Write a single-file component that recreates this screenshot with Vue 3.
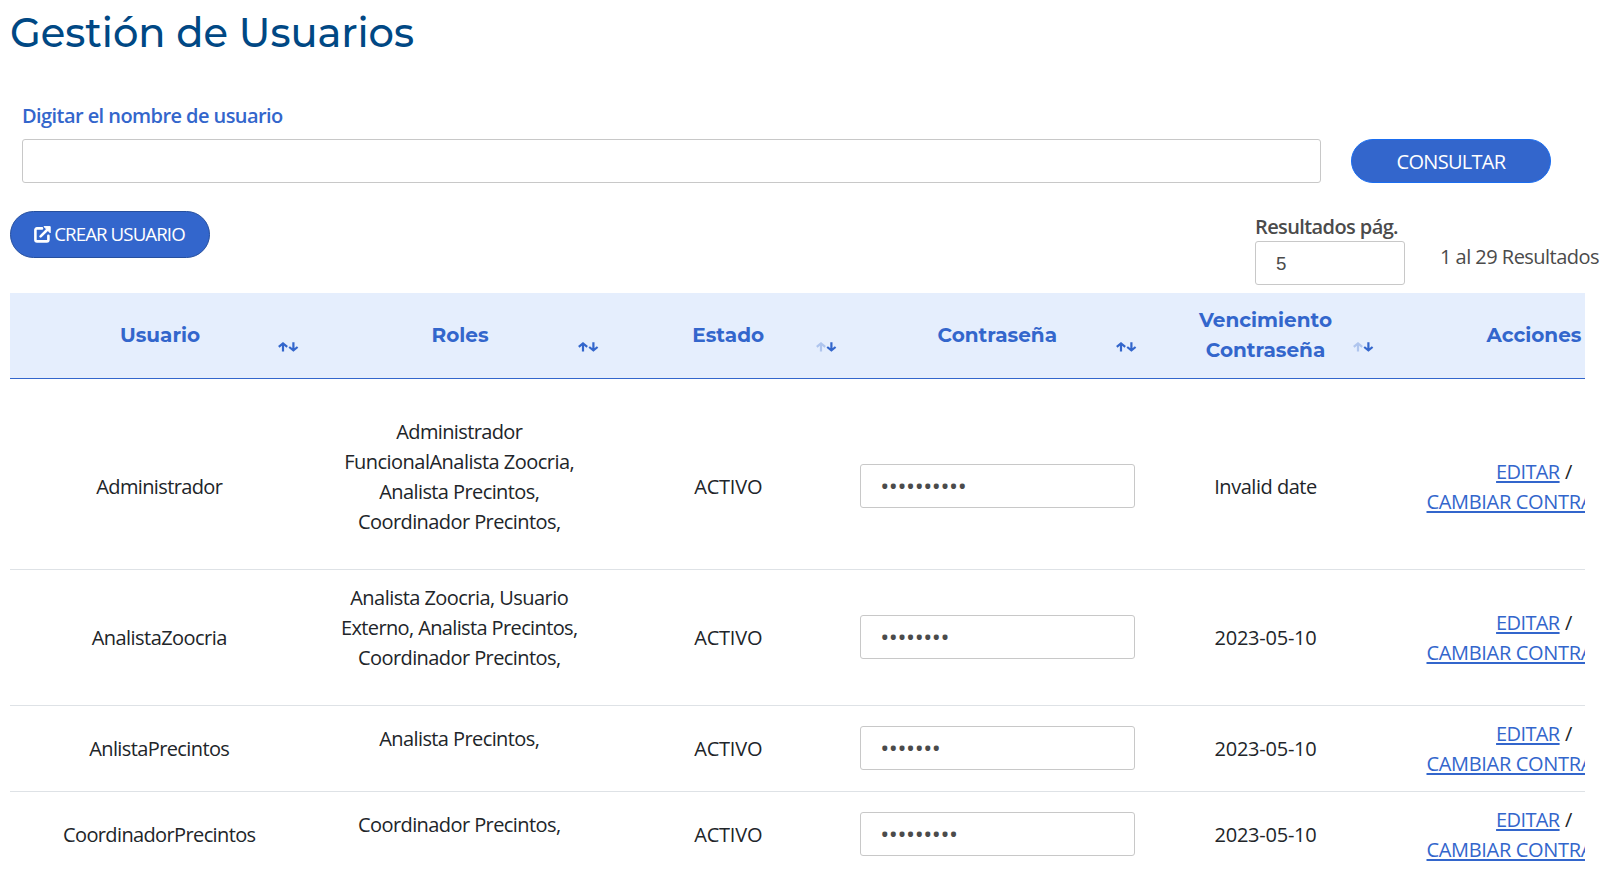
<script setup>
const columns = [
  { lines: [['Usuario', 80]], sort: 'both' },
  { lines: [['Roles', 57]], sort: 'both' },
  { lines: [['Estado', 72]], sort: 'down' },
  { lines: [['Contraseña', 119.5]], sort: 'both' },
  { lines: [['Vencimiento', 133], ['Contraseña', 119.5]], sort: 'down' },
  { lines: [['Acciones', 95]], sort: '' },
]

const rows = [
  {
    user: ['Administrador', 126],
    roles: [['Administrador', 126], ['FuncionalAnalista Zoocria,', 230], ['Analista Precintos,', 160], ['Coordinador Precintos,', 202.5]],
    dots: 10,
    date: ['Invalid date', 102.5],
    tall: true,
  },
  {
    user: ['AnalistaZoocria', 135],
    roles: [['Analista Zoocria, Usuario', 218], ['Externo, Analista Precintos,', 236.5], ['Coordinador Precintos,', 202.5]],
    dots: 8,
    date: ['2023-05-10', 102],
  },
  { user: ['AnlistaPrecintos', 140], roles: [['Analista Precintos,', 160]], dots: 7, date: ['2023-05-10', 102] },
  { user: ['CoordinadorPrecintos', 192.5], roles: [['Coordinador Precintos,', 202.5]], dots: 9, date: ['2023-05-10', 102] },
]

// Spreads an element's tracking so that its text takes the given width.
const vFit = {
  mounted(el, { value }) {
    const width = el.getBoundingClientRect().width
    el.style.letterSpacing = (value - width) / el.textContent.length + 'px'
  },
}
</script>

<template>
  <main class="page">
    <h1><span v-fit="404">Gestión de Usuarios</span></h1>

    <form class="search" @submit.prevent>
      <label class="field">
        <span class="label"><span v-fit="260.7">Digitar el nombre de usuario</span></span>
        <input class="box" type="text" />
      </label>
      <button class="query"><span v-fit="108.8">CONSULTAR</span></button>
    </form>

    <div class="toolbar">
      <button class="create">
        <svg width="17" height="17" viewBox="0 0 17 17" fill="none" stroke="#fff">
          <path d="M8 2.4H3Q1.4 2.4 1.4 4V13.8Q1.4 15.4 3 15.4H12.8Q14.4 15.4 14.4 13.8V9.8" stroke-width="2.6" stroke-linecap="round" />
          <path d="M6.6 10.4L13.5 3.5" stroke-width="2.6" stroke-linecap="round" />
          <path d="M10 .6H16.2V6.8Z" fill="#fff" stroke-width="1" stroke-linejoin="round" />
        </svg>
        <span v-fit="130.5">CREAR USUARIO</span>
      </button>
      <div class="paging">
        <div class="size">
          <span class="size-label"><span v-fit="143">Resultados pág.</span></span>
          <div class="box size-box">5</div>
        </div>
        <span class="total"><span v-fit="159">1 al 29 Resultados</span></span>
      </div>
    </div>

    <div class="table">
      <div class="row head">
        <div v-for="(c, i) in columns" :key="i" class="cell">
          <span v-for="l in c.lines" :key="l[0]" class="line"><span v-fit="l[1]">{{ l[0] }}</span></span>
          <svg v-if="c.sort" class="sort" :class="c.sort" width="21" height="10" viewBox="0 0 21 10" fill="none" stroke="#3366cc" stroke-width="2.2">
            <path d="M5 9.6V1.6M.8 4.8L5 1.4L9.2 4.8" :opacity="c.sort === 'both' ? 1 : 0.3" />
            <path d="M15.4 .2V8.2M11.2 5L15.4 8.4L19.6 5" />
          </svg>
        </div>
      </div>
      <div v-for="r in rows" :key="r.user[0]" class="row body" :class="{ tall: r.tall }">
        <div class="cell user"><span v-fit="r.user[1]">{{ r.user[0] }}</span></div>
        <div class="cell roles">
          <span v-for="l in r.roles" :key="l[0]" class="line"><span v-fit="l[1]">{{ l[0] }}</span></span>
        </div>
        <div class="cell"><span v-fit="68">ACTIVO</span></div>
        <div class="cell secret-cell">
          <div class="box secret"><span v-fit="r.dots * 8.6">{{ '•'.repeat(r.dots) }}</span></div>
        </div>
        <div class="cell"><span v-fit="r.date[1]">{{ r.date[0] }}</span></div>
        <div class="cell">
          <span class="line first"><a v-fit="63.5">EDITAR</a><span class="slash">/</span></span>
          <span class="line"><a v-fit="215">CAMBIAR CONTRASEÑA</a></span>
        </div>
      </div>
    </div>
  </main>
</template>

<style>
body {
  background: #fff;
  overflow: hidden;
}
</style>

<style scoped>
.page {
  box-sizing: border-box;
  width: 1607px;
  height: 877px;
  overflow: hidden;
  padding-left: 10px;
  font: 400 20px/30px "Segoe UI", "Open Sans", "Noto Sans", sans-serif;
  color: #212529;
  white-space: nowrap;
}
h1 {
  margin: 0;
  padding-top: 9px;
  height: 91px;
  font: 500 40px/48px Montserrat, Inter, sans-serif;
  color: #004884;
}
.search {
  display: flex;
  align-items: flex-end;
  gap: 30px;
  height: 83px;
  padding-left: 12px;
}
.field {
  display: flex;
  flex-direction: column;
  width: 1299px;
}
.label {
  margin-bottom: 8px;
  font-weight: 600;
  color: #3366cc;
}
.box {
  box-sizing: border-box;
  height: 44px;
  border: 1px solid #c8c8c8;
  border-radius: 3px;
  background: #fff;
  color: #4b4b4b;
}
button {
  display: flex;
  align-items: center;
  justify-content: center;
  box-sizing: border-box;
  width: 200px;
  padding: 0;
  font: inherit;
  color: #fff;
  background: #3366cc;
}
.query {
  height: 44px;
  padding-top: 2px;
  border: 1px solid #1a6df0;
  border-radius: 22px;
}
.toolbar {
  display: flex;
  justify-content: space-between;
  height: 82px;
  padding-top: 28px;
}
.create {
  height: 47px;
  gap: 3px;
  padding-right: 1px;
  padding-bottom: 1px;
  border: 1px solid #264f9e;
  border-radius: 24px;
  font-size: 18.7px;
}
.paging {
  display: flex;
  gap: 35px;
  width: 352px;
  color: #4b4b4b;
}
.size {
  display: flex;
  flex-direction: column;
  width: 150px;
}
.size-label {
  box-sizing: border-box;
  height: 30px;
  padding-top: 1px;
  font-weight: 600;
}
.size-box {
  padding: 7px 20px;
  font-family: "Liberation Sans", sans-serif;
  font-size: 18.7px;
}
.total {
  padding-top: 31px;
}
.table {
  width: 1575px;
  overflow: hidden;
}
.row {
  display: grid;
  grid-template-columns: 300px 300px 236.5px 301.5px 235px 302px;
  box-sizing: border-box;
  width: 1675px;
}
.cell {
  position: relative;
  display: flex;
  flex-direction: column;
  align-items: center;
  justify-content: center;
}
.line {
  display: block;
  height: 30px;
}
.head {
  height: 86px;
  border-bottom: 1px solid #3366cc;
  background: #e5eefd;
  font: 700 20px/30px Montserrat, Inter, sans-serif;
  color: #3366cc;
}
.head .cell {
  padding-bottom: 2px;
}
.sort {
  position: absolute;
  right: 11px;
  bottom: 26.5px;
}
.sort.down {
  right: 9.5px;
}
.body {
  min-height: 86px;
  border-bottom: 1px solid #dee2e6;
}
.tall {
  padding-top: 25px;
}
.user {
  padding-right: 1.5px;
}
.roles {
  padding: 12.5px 1.5px 12.5px 0;
}
.roles::after {
  content: "";
  height: 20px;
}
.secret-cell {
  padding-bottom: 1px;
}
.secret {
  width: 275px;
  padding: 6px 19.5px;
  font-size: 24px;
  line-height: 30px;
}
.first {
  padding-left: 4.5px;
}
a {
  color: #3366cc;
  text-decoration: underline;
  text-decoration-thickness: 2px;
  text-underline-offset: 2px;
}
.slash {
  margin-left: 5.5px;
  margin-right: 4px;
}
</style>
